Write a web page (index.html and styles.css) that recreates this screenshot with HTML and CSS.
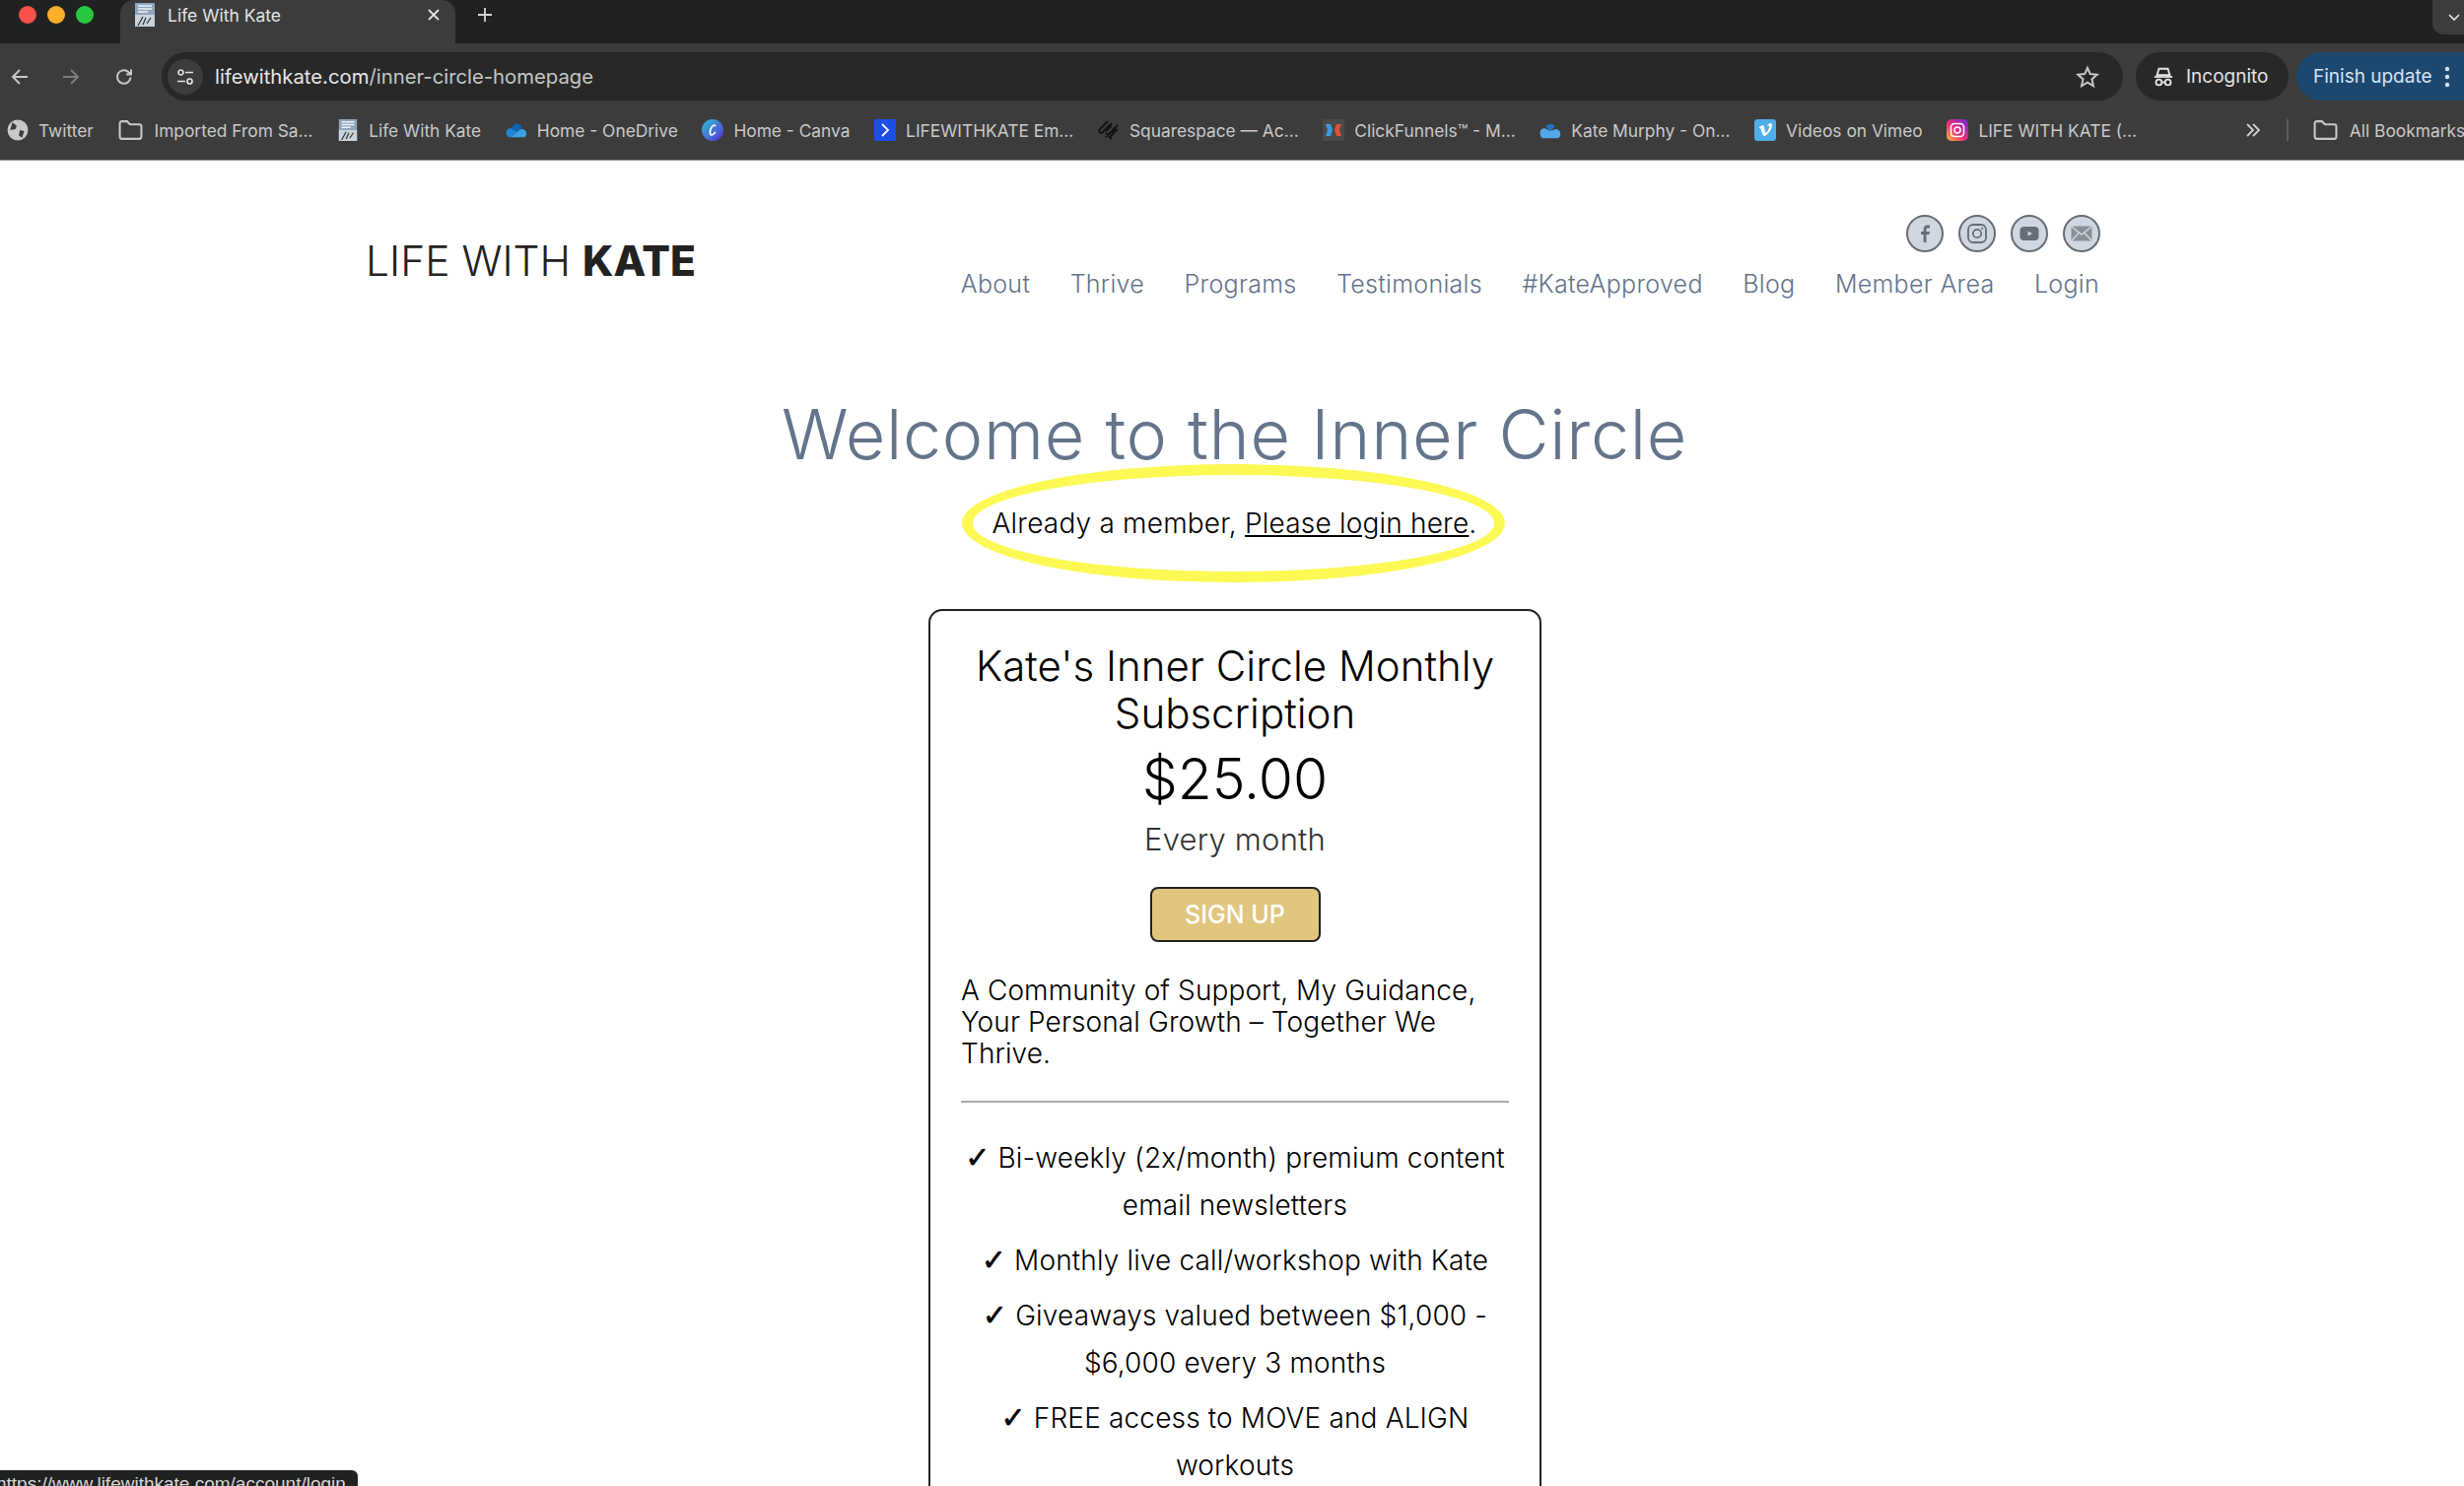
FILE: index.html
```html
<!DOCTYPE html>
<html>
<head>
  <meta charset="utf-8">
  <title>Life With Kate</title>
  <link rel="stylesheet" href="styles.css">
</head>
<body>
  <div class="chrome">
    <!-- tab strip -->
    <div class="tabstrip">
      <div class="lights"><span class="light red"></span><span class="light yellow"></span><span class="light green"></span></div>
      <div class="tab">
        <svg class="fav" viewBox="0 0 20 24"><rect width="20" height="24" fill="#8fa6bc"/><rect x="0" y="12" width="20" height="12" fill="#c9d3dc"/><path d="M3 3h14M3 6h14M3 9h10" stroke="#eef2f5" stroke-width="1.5"/><path d="M3 23l5-9M8 22l3-7M12 21l4-6" stroke="#333" stroke-width="1.3"/></svg>
        <span class="tab-title">Life With Kate</span>
        <svg class="tab-close" viewBox="0 0 12 12"><path d="M1 1l10 10M11 1L1 11" stroke="#e3e3e3" stroke-width="1.8"/></svg>
      </div>
      <svg class="new-tab" viewBox="0 0 16 16"><path d="M8 1v14M1 8h14" stroke="#d5d5d5" stroke-width="1.8"/></svg>
      <div class="tab-search"><svg viewBox="0 0 12 8"><path d="M1 1l5 5 5-5" fill="none" stroke="#e3e3e3" stroke-width="1.7"/></svg></div>
    </div>

    <!-- toolbar -->
    <div class="toolbar">
      <svg class="nav-ico" viewBox="0 0 20 20"><path d="M18 10H3M10 3l-7 7 7 7" fill="none" stroke="#c7c7c7" stroke-width="2"/></svg>
      <svg class="nav-ico fwd" viewBox="0 0 20 20"><path d="M2 10h15M10 3l7 7-7 7" fill="none" stroke="#7d7d7d" stroke-width="2"/></svg>
      <svg class="nav-ico reload" viewBox="0 0 20 20"><path d="M16.5 10.5a6.8 6.8 0 1 1-2-5.3L17 7.5M17 2.5v5h-5" fill="none" stroke="#c7c7c7" stroke-width="2"/></svg>
      <div class="omnibox">
        <span class="tune"><svg viewBox="0 0 18 18"><circle cx="4.5" cy="4.5" r="2.5" fill="none" stroke="#e3e3e3" stroke-width="1.7"/><path d="M9 4.5h8M1 13.5h8" stroke="#e3e3e3" stroke-width="1.7"/><circle cx="13.5" cy="13.5" r="2.5" fill="none" stroke="#e3e3e3" stroke-width="1.7"/></svg></span>
        <span class="url"><b>lifewithkate.com</b>/inner-circle-homepage</span>
        <svg class="star" viewBox="0 0 24 24"><path d="M12 2.8l2.8 6.3 6.9.7-5.2 4.6 1.5 6.8-6-3.5-6 3.5 1.5-6.8-5.2-4.6 6.9-.7z" fill="none" stroke="#c7c7c7" stroke-width="2"/></svg>
      </div>
      <div class="incognito">
        <svg viewBox="0 0 24 24"><path d="M7 3h10l2 7H5z" fill="none" stroke="#e3e3e3" stroke-width="2"/><path d="M2 12h20" stroke="#e3e3e3" stroke-width="2"/><circle cx="7" cy="18" r="3.2" fill="none" stroke="#e3e3e3" stroke-width="2"/><circle cx="17" cy="18" r="3.2" fill="none" stroke="#e3e3e3" stroke-width="2"/><path d="M10 18h4" stroke="#e3e3e3" stroke-width="2"/></svg>
        <span>Incognito</span>
      </div>
      <div class="update">
        <span>Finish update</span>
        <svg viewBox="0 0 6 24"><circle cx="3" cy="4" r="2.2" fill="#d5e3f3"/><circle cx="3" cy="12" r="2.2" fill="#d5e3f3"/><circle cx="3" cy="20" r="2.2" fill="#d5e3f3"/></svg>
      </div>
    </div>

    <!-- bookmarks -->
    <div class="bookmarks">
      <div class="bm"><svg class="bm-ico" viewBox="0 0 20 20"><circle cx="10" cy="10" r="9.5" fill="#c7c7c7"/><path d="M5 3l4 3-1 3-5 1M12 10l4 1-2 6-3-2z" fill="#3c3c3c"/></svg><span>Twitter</span></div>
      <div class="bm"><svg class="bm-ico bm-folder" viewBox="0 0 24 20"><path d="M1.500 3.500a2 2 0 0 1 2-2h5l3 3h9a2 2 0 0 1 2 2v10a2 2 0 0 1-2 2h-17a2 2 0 0 1-2-2z" fill="none" stroke="#c7c7c7" stroke-width="2"/></svg><span>Imported From Sa...</span></div>
      <div class="bm"><svg class="bm-ico" viewBox="0 0 20 24"><rect width="20" height="24" fill="#8fa6bc"/><rect x="0" y="12" width="20" height="12" fill="#c9d3dc"/><path d="M3 3h14M3 6h14M3 9h10" stroke="#eef2f5" stroke-width="1.5"/><path d="M3 23l5-9M8 22l3-7M12 21l4-6" stroke="#333" stroke-width="1.3"/></svg><span>Life With Kate</span></div>
      <div class="bm"><svg class="bm-ico" viewBox="0 0 24 18"><path d="M9 3a6 6 0 0 1 9 3l-4 5-8-3z" fill="#0f62b5"/><path d="M1 14a5 5 0 0 1 5-7l7 4-7 6H3z" fill="#1f86d8"/><path d="M6 17l8-7a5 5 0 0 1 9 3 4 4 0 0 1-3 4z" fill="#39a3e8"/></svg><span>Home - OneDrive</span></div>
      <div class="bm"><svg class="bm-ico" viewBox="0 0 22 22"><defs><linearGradient id="cv" x1="0" y1="0" x2="1" y2="1"><stop offset="0" stop-color="#2bc4d4"/><stop offset="1" stop-color="#5a2dd8"/></linearGradient></defs><circle cx="11" cy="11" r="11" fill="url(#cv)"/><path d="M14 7c-1-2-4 0-5 3s-1 6 1 6 3-2 4-3" fill="none" stroke="#fff" stroke-width="1.7"/></svg><span>Home - Canva</span></div>
      <div class="bm"><svg class="bm-ico" viewBox="0 0 22 22"><rect width="22" height="22" fill="#1d4ee8"/><path d="M8 5l6 6-6 6" fill="none" stroke="#fff" stroke-width="1.8"/></svg><span>LIFEWITHKATE Em...</span></div>
      <div class="bm"><svg class="bm-ico" viewBox="0 0 22 22"><path d="M2 10l8-8M5 13L14 4M8 18L20 6M8 12l6-6M8 14l6 6M12 18l8-8M14 14l4-4M2 10c-2 3 1 5 3 3" fill="none" stroke="#111" stroke-width="1.8"/></svg><span>Squarespace — Ac...</span></div>
      <div class="bm"><svg class="bm-ico" viewBox="0 0 22 22"><rect width="22" height="22" fill="#4a4a4a"/><path d="M3 5h5l2 6-2 6H3l2-6z" fill="#3d9be0"/><path d="M19 5h-5l-2 6 2 6h5l-2-6z" fill="#d6543a"/></svg><span>ClickFunnels™ - M...</span></div>
      <div class="bm"><svg class="bm-ico" viewBox="0 0 24 20"><path d="M7 6a6 6 0 0 1 10 0l-5 6z" fill="#1f73c4"/><path d="M1 15a5 5 0 0 1 5-7l6 3 6-2a5 5 0 0 1 5 6 4 4 0 0 1-3 4H4a4 4 0 0 1-3-4z" fill="#52a9ea"/></svg><span>Kate Murphy - On...</span></div>
      <div class="bm"><svg class="bm-ico" viewBox="0 0 22 22"><rect width="22" height="22" rx="3" fill="#4eaee8"/><path d="M5 8c3-2 4-3 5 0l1 5c1 2 2 0 4-4 1-3-1-3-2-2 1-4 6-4 5 0-1 5-6 10-8 10-2 0-3-7-4-8l-1 .5z" fill="#fff"/></svg><span>Videos on Vimeo</span></div>
      <div class="bm"><svg class="bm-ico" viewBox="0 0 22 22"><defs><linearGradient id="ig" x1="0" y1="1" x2="1" y2="0"><stop offset="0" stop-color="#fdc030"/><stop offset=".45" stop-color="#ee2a7b"/><stop offset="1" stop-color="#6a2bd9"/></linearGradient></defs><rect width="22" height="22" rx="5" fill="url(#ig)"/><rect x="4.500" y="4.500" width="13" height="13" rx="3.500" fill="none" stroke="#fff" stroke-width="1.500"/><circle cx="11" cy="11" r="3" fill="none" stroke="#fff" stroke-width="1.500"/></svg><span>LIFE WITH KATE (...</span></div>
      <svg class="bm-more" viewBox="0 0 16 14"><path d="M2 1l6 6-6 6M8 1l6 6-6 6" fill="none" stroke="#d0d0d0" stroke-width="1.800"/></svg>
      <span class="bm-sep"></span>
      <div class="bm"><svg class="bm-ico bm-folder" viewBox="0 0 24 20"><path d="M1.500 3.500a2 2 0 0 1 2-2h5l3 3h9a2 2 0 0 1 2 2v10a2 2 0 0 1-2 2h-17a2 2 0 0 1-2-2z" fill="none" stroke="#c7c7c7" stroke-width="2"/></svg><span>All Bookmarks</span></div>
    </div>
  </div>

  <div class="page">
    <header class="site-head">
      <a class="logo">LIFE WITH <b>KATE</b></a>
      <div class="head-right">
        <div class="socials">
          <span class="soc"><svg viewBox="0 0 24 24"><path d="M13.500 21v-8h3l.5-3h-3.500V8c0-1 .4-1.600 1.600-1.600H17V3.600c-.5-.1-1.400-.2-2.400-.2-2.500 0-4 1.500-4 4.200V10H8v3h2.600v8z" fill="#666d75"/></svg></span>
          <span class="soc"><svg viewBox="0 0 24 24"><rect x="3" y="3" width="18" height="18" rx="5" fill="none" stroke="#666d75" stroke-width="1.800"/><circle cx="12" cy="12" r="4.200" fill="none" stroke="#666d75" stroke-width="1.800"/><circle cx="17.200" cy="6.800" r="1.100" fill="#666d75"/></svg></span>
          <span class="soc"><svg viewBox="0 0 24 24"><rect x="2.500" y="5" width="19" height="14" rx="4" fill="#666d75"/><path d="M10.500 9.500l4.500 2.500-4.500 2.500z" fill="#d0d7e0"/></svg></span>
          <span class="soc"><svg viewBox="0 0 24 24"><rect x="1.500" y="4.500" width="21" height="15" rx="1.500" fill="#8b9096"/><path d="M2 5l10 8 10-8M2 19l7.500-8M22 19l-7.500-8" fill="none" stroke="#d0d7e0" stroke-width="1.400"/></svg></span>
        </div>
        <nav class="nav">
          <a>About</a><a>Thrive</a><a>Programs</a><a>Testimonials</a><a>#KateApproved</a><a>Blog</a><a>Member Area</a><a>Login</a>
        </nav>
      </div>
    </header>

    <h1 class="welcome">Welcome to the Inner Circle</h1>
    <p class="member"><span class="member-text">Already a member, <a>Please login here</a>.<span class="ring"></span></span></p>

    <section class="plan">
      <h2 class="plan-title">Kate's Inner Circle Monthly Subscription</h2>
      <div class="price">$25.00</div>
      <div class="every">Every month</div>
      <a class="signup">SIGN UP</a>
      <p class="blurb">A Community of Support, My Guidance, Your Personal Growth – Together We Thrive.</p>
      <hr class="rule">
      <ul class="perks">
        <li><span class="tick">✓</span> Bi-weekly (2x/month) premium content email newsletters</li>
        <li><span class="tick">✓</span> Monthly live call/workshop with Kate</li>
        <li><span class="tick">✓</span> Giveaways valued between $1,000 - $6,000 every 3 months</li>
        <li><span class="tick">✓</span> FREE access to MOVE and ALIGN workouts</li>
      </ul>
    </section>
  </div>

  <div class="status">https://www.lifewithkate.com/account/login</div>
</body>
</html>
```

FILE: styles.css
```css
* {
    margin: 0;
    padding: 0;
    box-sizing: border-box;
}

html, body {
    height: 1508px;
    overflow: hidden;
    background: #fff;
}

body {
    font-family: Inter, "Liberation Sans", sans-serif;
}

/* browser frame */
.chrome {
    background: #3c3c3c;
    border-bottom: 1px solid #8a8a8a;
    height: 163px;
    color: #d5d5d5;
}

.tabstrip {
    display: flex;
    align-items: center;
    height: 44px;
    background: #202221;
}

.lights {
    display: flex;
    gap: 11px;
    width: 122px;
    margin-bottom: 14px;
    padding-left: 19px;
}

.light {
    width: 18px;
    height: 18px;
    border-radius: 50%;
}

.red { background: #f5504a; }
.yellow { background: #fbb029; }
.green { background: #27c83f; }

.tab {
    display: flex;
    align-items: center;
    width: 340px;
    height: 44px;
    padding: 0 16px 14px 15px;
    background: #3c3c3c;
    border-radius: 14px 14px 0 0;
}

.fav {
    width: 20px;
    height: 24px;
    margin-right: 13px;
}

.tab-title {
    flex: 1;
    font-size: 17.500px;
    color: #e3e3e3;
}

.tab-close {
    width: 12px;
    height: 12px;
}

.new-tab {
    width: 16px;
    height: 16px;
    margin-left: 22px;
    margin-bottom: 14px;
}

.tab-search {
    display: flex;
    align-items: center;
    justify-content: center;
    width: 32px;
    height: 35px;
    margin-left: auto;
    margin-top: -9px;
    padding-left: 12px;
    background: #3c3c3c;
    border-radius: 0 0 0 12px;
}

.tab-search svg {
    width: 12px;
    height: 8px;
}

.toolbar {
    display: flex;
    align-items: center;
    height: 58px;
    padding: 9px 0 0 10px;
}

.nav-ico {
    width: 20px;
    height: 20px;
}

.fwd { margin-left: 32px; }
.reload { margin-left: 34px; }

.omnibox {
    display: flex;
    align-items: center;
    width: 1990px;
    height: 49px;
    margin-left: 28px;
    padding: 0 24px 0 6px;
    background: #282828;
    border-radius: 25px;
}

.tune {
    display: flex;
    align-items: center;
    justify-content: center;
    width: 36px;
    height: 36px;
    background: #3c3c3c;
    border-radius: 50%;
}

.tune svg {
    width: 18px;
    height: 18px;
}

.url {
    flex: 1;
    margin-left: 12px;
    font-size: 20.300px;
    color: #c4c7c5;
}

.url b {
    font-weight: 400;
    color: #e6e6e6;
}

.star {
    width: 24px;
    height: 24px;
}

.incognito {
    display: flex;
    align-items: center;
    gap: 12px;
    width: 155px;
    height: 49px;
    margin-left: 13px;
    padding-left: 17px;
    background: #282828;
    border-radius: 25px;
    font-size: 19px;
    color: #e3e3e3;
}

.incognito svg {
    width: 22px;
    height: 22px;
}

.update {
    display: flex;
    align-items: center;
    flex: 1;
    gap: 12px;
    height: 49px;
    margin-left: 8px;
    padding-left: 17px;
    background: #1c476f;
    border-radius: 25px 0 0 25px;
    font-size: 19px;
    color: #d5e3f3;
    white-space: nowrap;
}

.update svg {
    width: 6px;
    height: 24px;
}

.bookmarks {
    display: flex;
    align-items: center;
    gap: 24.600px;
    height: 60px;
    padding-left: 7px;
    font-size: 17.350px;
    color: #c9c9c9;
    white-space: nowrap;
}

.bm {
    display: flex;
    flex: none;
    align-items: center;
    gap: 10px;
}

.bm-ico {
    flex: none;
    width: 22px;
    height: 22px;
}

.bm-folder {
    width: 25px;
    margin-right: 2px;
}

.bm-more {
    flex: none;
    width: 16px;
    height: 14px;
    margin-left: 85px;
}

.bm-sep {
    flex: none;
    width: 2px;
    height: 22px;
    margin-left: 2px;
    background: #5c5c5c;
}

/* site */
.page {
    width: 1759px;
    margin-left: 371px;
}

.site-head {
    display: flex;
    justify-content: space-between;
    height: 140px;
}

.logo {
    padding-top: 75px;
    font-size: 42.500px;
    font-weight: 300;
    line-height: 54px;
    color: #222;
}

.logo b {
    font-weight: 800;
}

.head-right {
    display: flex;
    flex-direction: column;
    align-items: flex-end;
}

.socials {
    display: flex;
    gap: 15px;
    margin-top: 55px;
    margin-right: -1px;
}

.soc {
    display: flex;
    align-items: center;
    justify-content: center;
    width: 38px;
    height: 38px;
    background: #d0d7e0;
    border: 2px solid #666d75;
    border-radius: 50%;
}

.soc svg {
    width: 24px;
    height: 24px;
}

.nav {
    display: flex;
    gap: 40.500px;
    margin-top: 17px;
    font-size: 25px;
    font-weight: 300;
    letter-spacing: .3px;
    color: #64748b;
    white-space: nowrap;
}

.welcome {
    width: 2500px;
    margin-top: 95px;
    margin-left: -371px;
    padding-left: 5px;
    font-size: 70px;
    font-weight: 300;
    letter-spacing: .7px;
    line-height: 86px;
    text-align: center;
    color: #64748b;
}

.member {
    width: 2500px;
    margin-top: 29px;
    margin-left: -371px;
    padding-left: 5px;
    font-size: 28px;
    font-weight: 300;
    letter-spacing: .2px;
    line-height: 36px;
    text-align: center;
    color: #000;
}

.member-text {
    position: relative;
    display: inline-block;
}

.member-text a {
    text-decoration: underline;
}

.ring {
    position: absolute;
    top: -42px;
    left: -31px;
    right: -29px;
    bottom: -42px;
    border: 11px solid #fdfa55;
    border-radius: 50%;
}

.plan {
    width: 622px;
    height: 1200px;
    margin-top: 69px;
    margin-left: 571px;
    padding: 32px 31px;
    background: #fff;
    border: 2px solid #222;
    border-radius: 14px;
    color: #000;
    text-align: center;
    font-weight: 300;
}

.plan-title {
    font-size: 42px;
    font-weight: 350;
    line-height: 48px;
}

.price {
    margin-top: 5px;
    font-size: 57px;
    font-weight: 350;
    line-height: 76px;
}

.every {
    margin-top: 3px;
    font-size: 31px;
    font-weight: 300;
    letter-spacing: .2px;
    line-height: 40px;
    color: #333;
}

.signup {
    display: block;
    width: 173px;
    height: 56px;
    margin: 28px auto 0;
    background: #e0c67e;
    border: 2px solid #222;
    border-radius: 8px;
    font-size: 25px;
    font-weight: 500;
    line-height: 52px;
    color: #fff;
}

.blurb {
    margin-top: 33px;
    font-size: 28px;
    letter-spacing: .1px;
    line-height: 32px;
    text-align: left;
}

.rule {
    height: 2px;
    margin-top: 32px;
    border: 0;
    background: #aaa;
}

.perks {
    margin-top: 32px;
    list-style: none;
    font-size: 28px;
    letter-spacing: .15px;
    line-height: 48px;
}

.perks li {
    margin-bottom: 8px;
}

.tick {
    font-family: "DejaVu Sans", sans-serif;
    font-size: 30px;
    font-weight: 400;
    line-height: 0;
    -webkit-text-stroke: .6px #000;
}

.status {
    position: absolute;
    left: 0;
    top: 1492px;
    width: 363px;
    height: 16px;
    padding-top: 3px;
    overflow: hidden;
    background: #202221;
    border-radius: 0 6px 0 0;
    font-family: "Liberation Sans", sans-serif;
    font-size: 19px;
    white-space: nowrap;
    color: #d5d5d5;
    text-indent: -4px;
}
```
